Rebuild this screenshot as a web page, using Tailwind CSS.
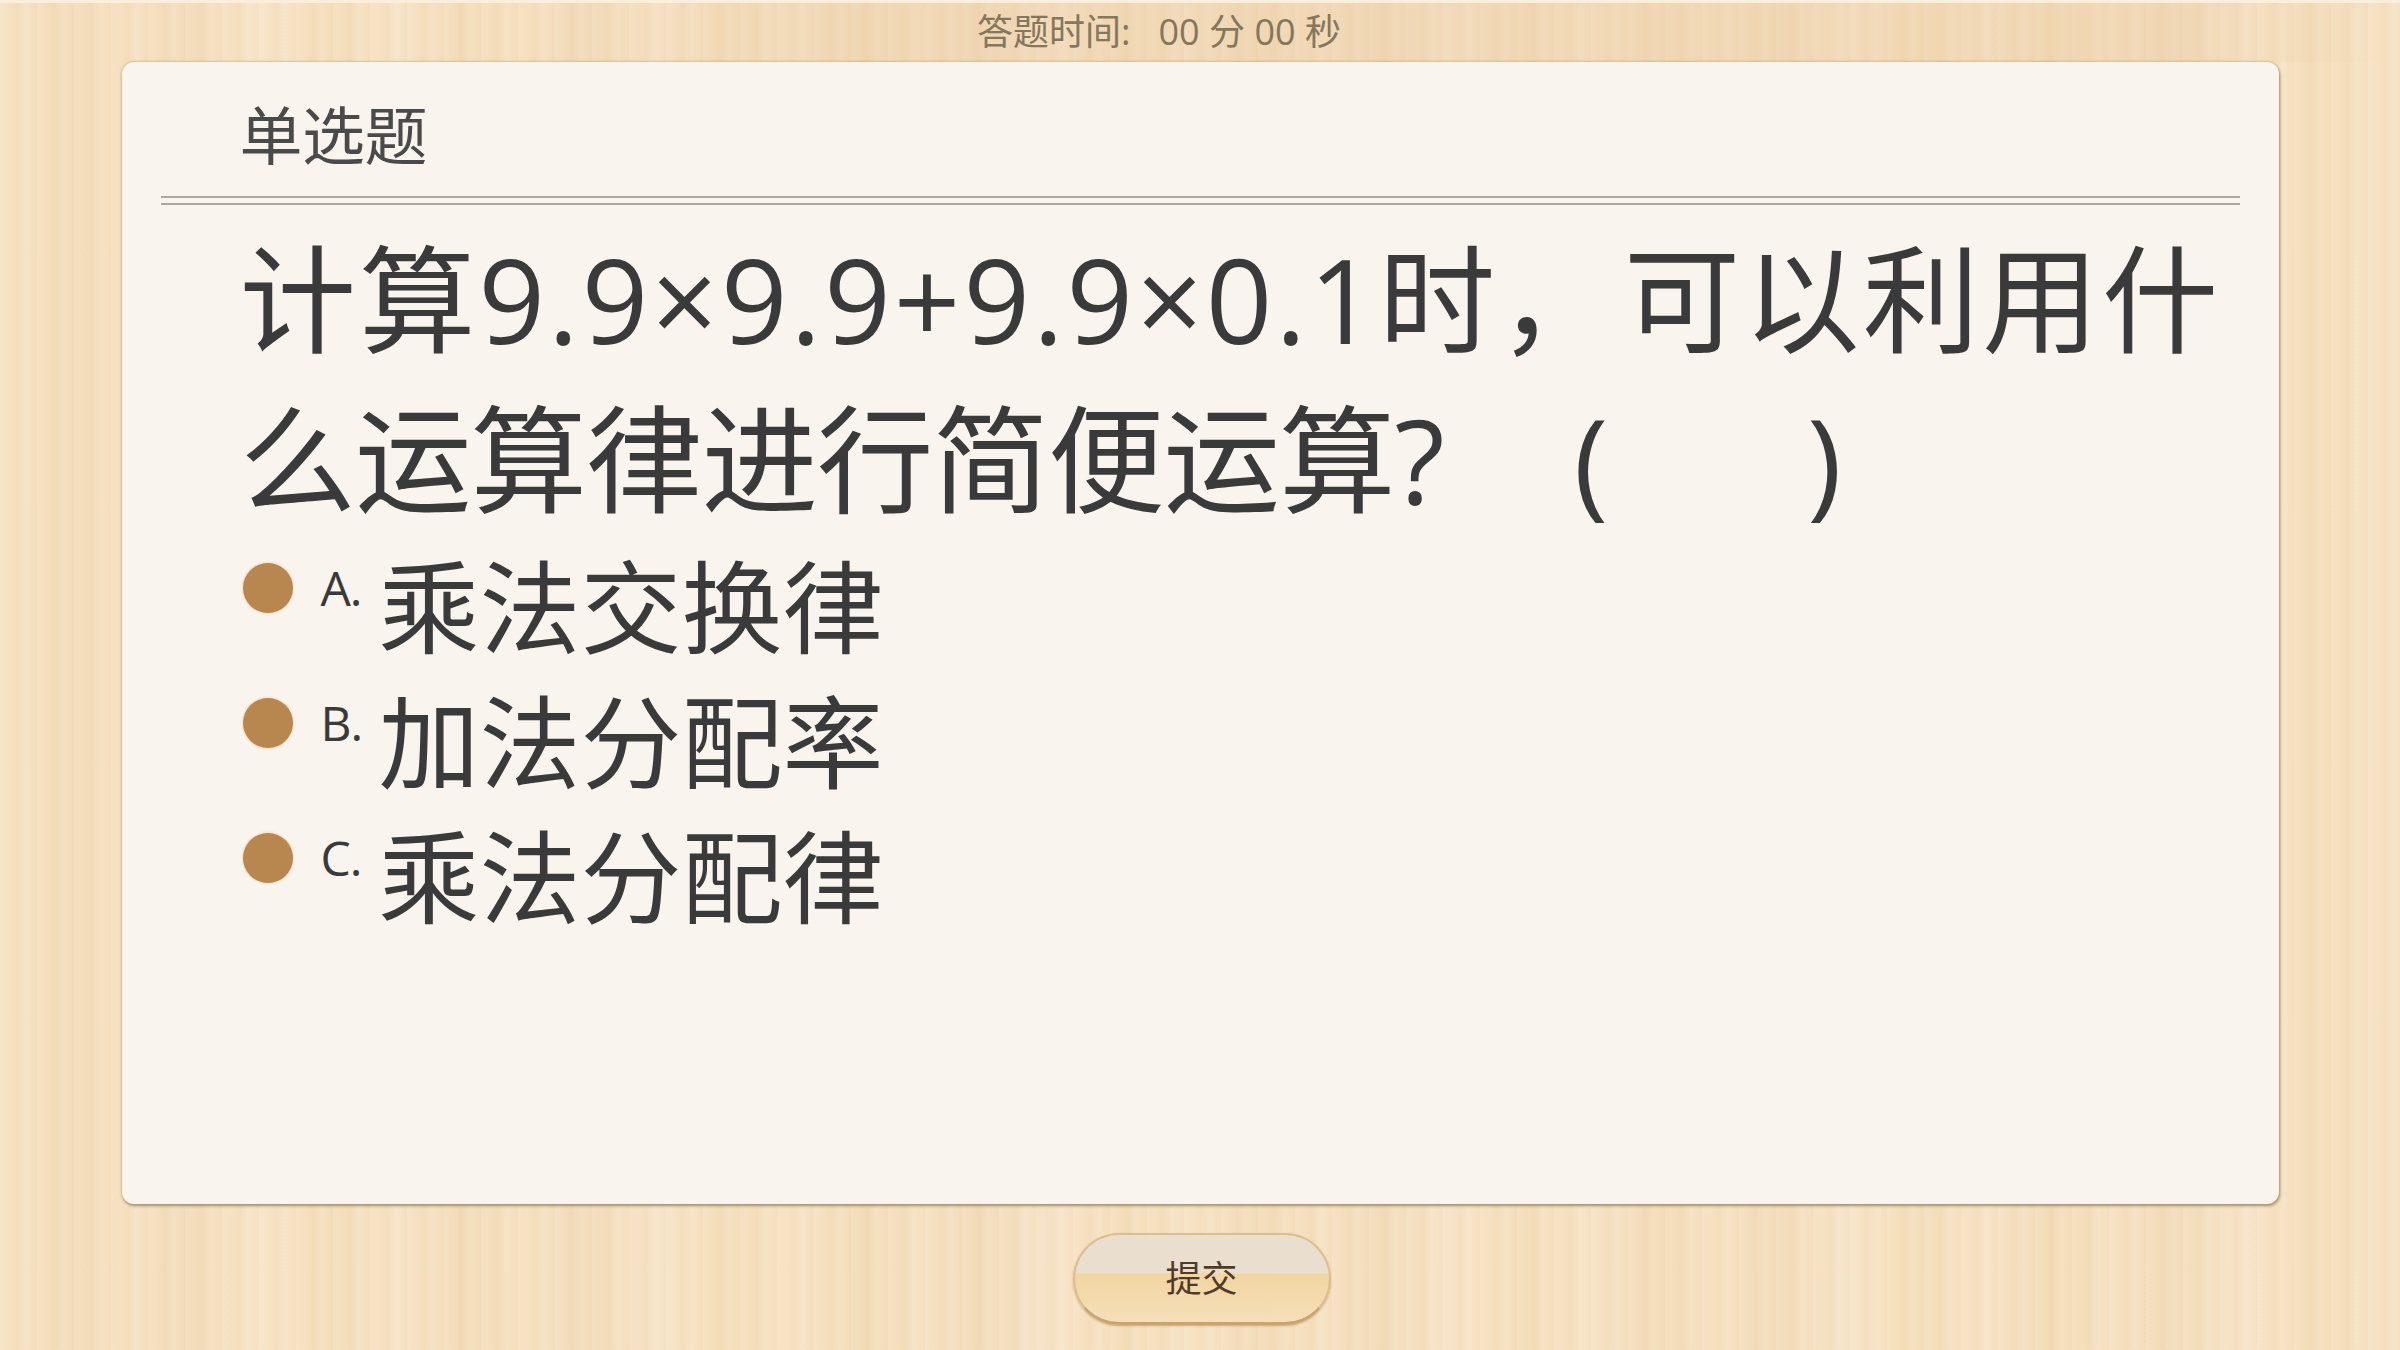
<!DOCTYPE html>
<html lang="zh-CN">
<head>
  <meta charset="UTF-8" />
  <title>单选题</title>
  <script src="https://cdn.jsdelivr.net/npm/@tailwindcss/browser@4"></script>
</head>
<body class="w-[2400px] h-[1350px] overflow-hidden flex flex-col items-center bg-[#f4dfbe] font-['Open_Sans','Noto_Sans_CJK_SC',sans-serif] bg-[repeating-linear-gradient(90deg,#ffffff14_0px,#ffffff00_9px,#c8964a0d_17px,#ffffff1a_26px,#c8964a08_37px),repeating-linear-gradient(90deg,#f6e3c5_0px,#f3dcb9_67px,#f6e1c1_131px,#f2dcba_187px,#f7e4c8_263px,#f4deba_331px,#f6e3c5_397px)]">

  <!-- timer -->
  <div class="h-[62px] w-full shrink-0 flex items-center justify-center gap-[28px] pr-[82px] pb-[2px] text-[36px] text-[#85765d] border-t-[3px] border-[#fbeeda] bg-[linear-gradient(90deg,#e9c9a000_0%,#e9c9a000_20%,#e9c9a055_35%,#e9c9a055_90%,#e9c9a000_100%)]">
    <span>答题时间:</span>
    <span>00 分 00 秒</span>
  </div>

  <!-- question card -->
  <div class="w-[2157px] h-[1142px] shrink-0 bg-[#f9f5ee] rounded-[12px] px-[39px] shadow-[1px_2px_3px_#a8936c,0_0_3px_#b9a27a]">
    <div class="h-[134px] pl-[79px] pt-[12px] flex items-center text-[63px] text-[#4a4a4a] tracking-[-0.5px]">单选题</div>
    <div class="h-[9px] border-y-[2px] border-[#aca89e]"></div>

    <div class="pl-[79px] pt-[14px] text-[116.5px] leading-[160px] text-[#3a3a3a] w-[2079px]"><span class="tracking-[3px]">计算9.9×9.9+9.9×0.1时</span><span class="tracking-[9px]">，</span><span class="tracking-[3px]">可以利用什</span><span class="tracking-[-1px]">么运算律进行简便运算?</span><span class="ml-[130px]">(</span><span class="ml-[199px]">)</span></div>

    <ul class="pl-[82px] pt-[3px] text-[#3a3a3a]">
      <li class="h-[135px] flex items-center">
        <span class="w-[50px] h-[50px] rounded-full bg-[#b8874f] shadow-[0_0_3px_#e6c48f] mb-[44px]"></span>
        <span class="w-[58px] ml-[28px] text-[48px] tracking-[-1px] mb-[44px]">A.</span>
        <span class="text-[101px] -mt-[4px]">乘法交换律</span>
      </li>
      <li class="h-[135px] flex items-center">
        <span class="w-[50px] h-[50px] rounded-full bg-[#b8874f] shadow-[0_0_3px_#e6c48f] mb-[44px]"></span>
        <span class="w-[58px] ml-[28px] text-[48px] tracking-[-1px] mb-[44px]">B.</span>
        <span class="text-[101px] -mt-[4px]">加法分配率</span>
      </li>
      <li class="h-[135px] flex items-center">
        <span class="w-[50px] h-[50px] rounded-full bg-[#b8874f] shadow-[0_0_3px_#e6c48f] mb-[44px]"></span>
        <span class="w-[58px] ml-[28px] text-[48px] tracking-[-1px] mb-[44px]">C.</span>
        <span class="text-[101px] -mt-[4px]">乘法分配律</span>
      </li>
    </ul>
  </div>

  <!-- submit -->
  <button class="mt-[29px] ml-[3px] w-[258px] h-[92px] rounded-[46px] border-[2px] border-[#dcbd8e] border-b-[3px] border-b-[#c8a56f] text-[36px] text-[#4f3c28] bg-[linear-gradient(180deg,#eadfcf_0%,#eadfcf_43%,#f2d5a2_45%,#f5dfb8_100%)] shadow-[0_1px_2px_#c9a878]">提交</button>
</body>
</html>
